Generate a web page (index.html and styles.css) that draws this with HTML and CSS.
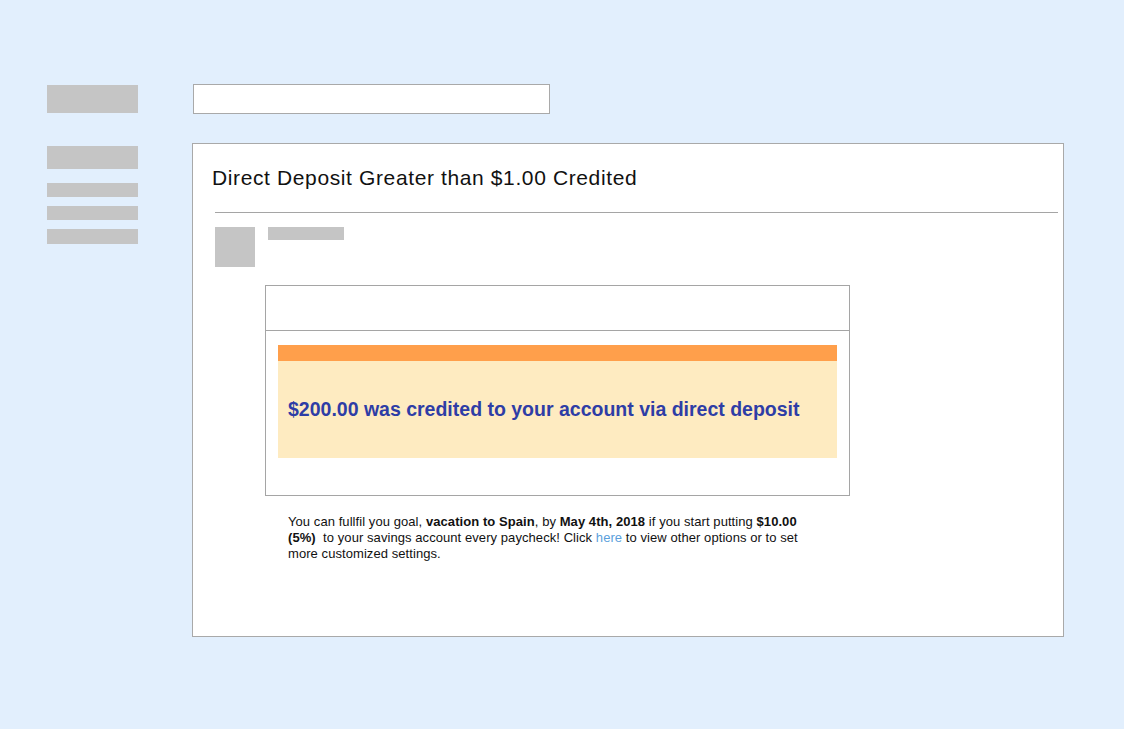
FILE: index.html
```html
<!DOCTYPE html>
<html>
<head>
<meta charset="utf-8">
<link rel="stylesheet" href="styles.css">
</head>
<body>
<div class="page">
  <aside class="sidebar">
    <div class="sb sb-logo"></div>
    <div class="sb sb-head"></div>
    <div class="sb sb-item"></div>
    <div class="sb sb-item"></div>
    <div class="sb sb-item sb-last"></div>
  </aside>
  <main class="main">
    <div class="search"></div>
    <section class="card">
      <h1 class="title">Direct Deposit Greater than $1.00 Credited</h1>
      <hr class="divider">
      <div class="sender">
        <div class="avatar"></div>
        <div class="name"></div>
      </div>
      <div class="email">
        <div class="email-head"></div>
        <div class="email-body">
          <div class="alert-bar"></div>
          <div class="alert">$200.00 was credited to your account via direct deposit</div>
        </div>
      </div>
      <p class="note">You can fullfil you goal, <b>vacation to Spain</b>, by <b>May 4th, 2018</b> if you start putting <b>$10.00 (5%)</b>&nbsp; to your savings account every paycheck! Click <a class="link" href="#">here</a> to view other options or to set more customized settings.</p>
    </section>
  </main>
</div>
</body>
</html>
```

FILE: styles.css
```css
html, body {
  margin: 0;
  padding: 0;
}
body {
  background: #e2effd;
  font-family: "Liberation Sans", Arial, sans-serif;
  color: #111;
  width: 1124px;
  height: 729px;
  overflow: hidden;
}
.page {
  display: flex;
  align-items: flex-start;
  padding: 84px 0 0 47px;
}
.sidebar {
  width: 91px;
  display: flex;
  flex-direction: column;
  padding-top: 1px;
}
.sb {
  background: #c5c5c5;
}
.sb-logo {
  height: 28px;
  margin-bottom: 33px;
}
.sb-head {
  height: 23px;
  margin-bottom: 14px;
}
.sb-item {
  height: 14px;
  margin-bottom: 9px;
}
.sb-last {
  height: 15px;
  margin-bottom: 0;
}
.main {
  margin-left: 54px;
  display: flex;
  flex-direction: column;
}
.search {
  margin-left: 1px;
  width: 355px;
  height: 28px;
  background: #fff;
  border: 1px solid #a9a9a9;
}
.card {
  margin-top: 29px;
  width: 870px;
  height: 492px;
  background: #fff;
  border: 1px solid #a9a9a9;
  box-sizing: content-box;
}
.title {
  margin: 22px 0 0 19px;
  font-size: 21px;
  line-height: 24px;
  font-weight: normal;
  color: #111;
  letter-spacing: 0.62px;
}
.divider {
  margin: 22px 5px 0 22px;
  border: 0;
  height: 1px;
  background: #a5a5a5;
}
.sender {
  display: flex;
  align-items: flex-start;
  gap: 13px;
  margin: 14px 0 0 22px;
}
.avatar {
  width: 40px;
  height: 40px;
  background: #c5c5c5;
}
.name {
  width: 76px;
  height: 13px;
  background: #c5c5c5;
}
.email {
  margin: 18px 0 0 72px;
  width: 583px;
  border: 1px solid #a5a5a5;
}
.email-head {
  height: 44px;
  border-bottom: 1px solid #a5a5a5;
}
.email-body {
  padding: 14px 12px 37px;
}
.alert-bar {
  height: 16px;
  background: #ff9f4b;
}
.alert {
  height: 97px;
  display: flex;
  align-items: center;
  padding-left: 10px;
  background: #feebc1;
  color: #2e3da6;
  font-weight: bold;
  font-size: 19.5px;
}
.note {
  margin: 18px 0 0 95px;
  width: 525px;
  font-size: 13px;
  line-height: 16px;
  letter-spacing: 0.07px;
  color: #111;
}
.note b {
  font-weight: bold;
}
.link {
  color: #5b9fdc;
  text-decoration: none;
}
```
